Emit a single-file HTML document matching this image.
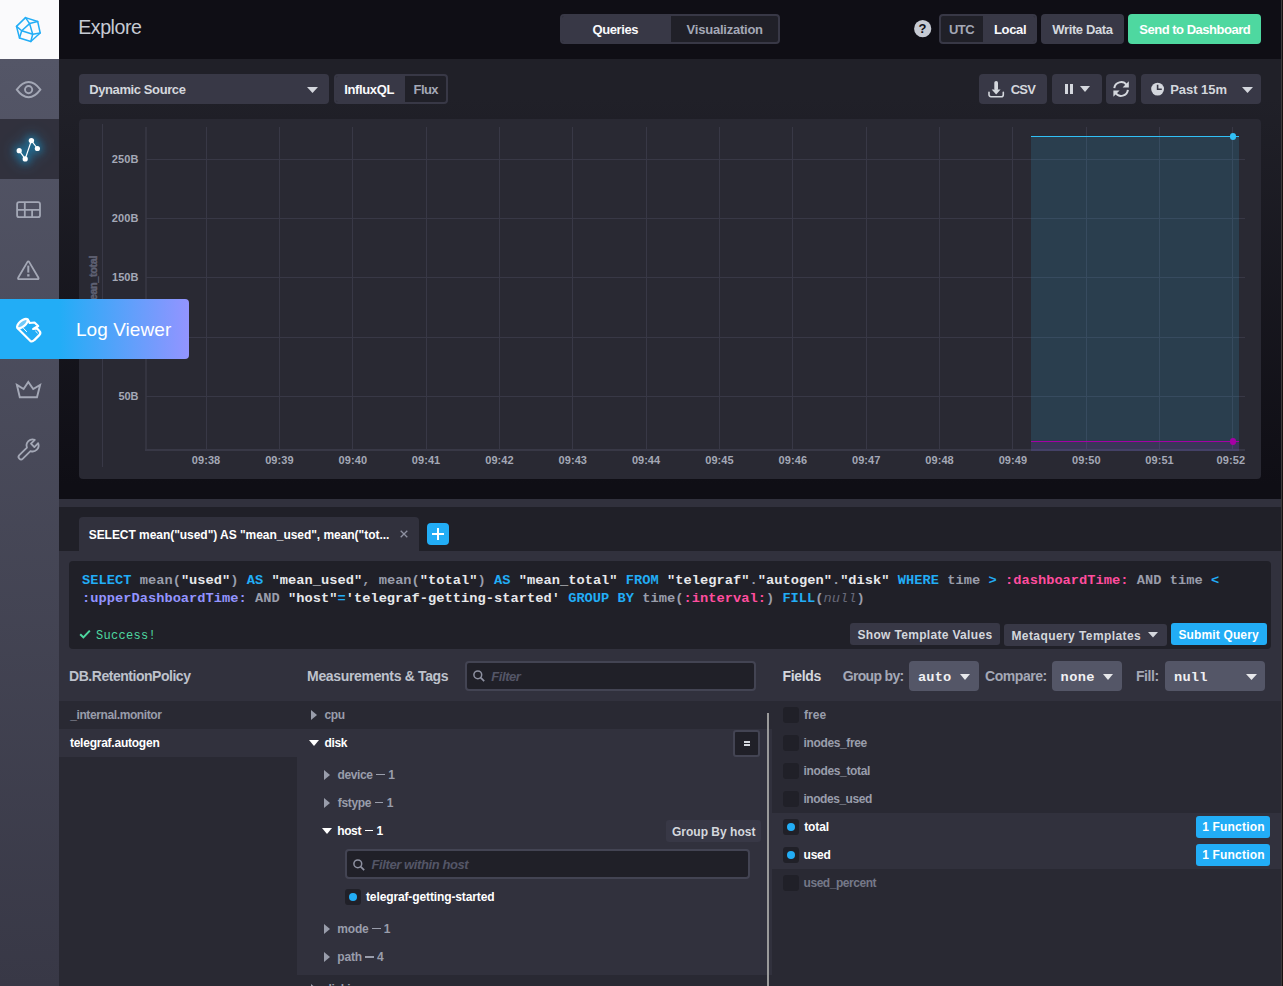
<!DOCTYPE html>
<html lang="en">
<head>
<meta charset="utf-8">
<title>Explore</title>
<style>
*{box-sizing:border-box;margin:0;padding:0}
html,body{width:1283px;height:986px;overflow:hidden;background:#0f0e15}
body{font-family:"Liberation Sans",sans-serif;color:#c6cad3;position:relative;font-size:13px}
.a{position:absolute}
.t{position:absolute;white-space:nowrap;line-height:1}
.b{font-weight:700}
.i{font-style:italic}
.m{font-family:"Liberation Mono",monospace}
svg{position:absolute;overflow:visible}
#sidebar{position:absolute;left:0;top:0;width:59px;height:986px;background:linear-gradient(180deg,#545667 0,#545667 59px,#383846 986px)}
#logo{position:absolute;left:0;top:0;width:59px;height:59px;background:#fafafc}
#navact{position:absolute;left:0;top:119px;width:59px;height:60px;background:#31313d}
#flyout{position:absolute;left:0;top:299px;width:189px;height:60px;border-radius:0 4px 4px 0;background:linear-gradient(90deg,#22adf6 0,#22adf6 59px,#9394ff 189px)}
#header{position:absolute;left:59px;top:0;width:1222px;height:59px;background:#0f0e15}
#page{position:absolute;left:59px;top:59px;width:1222px;height:927px;background:#202028}
#gz{position:absolute;left:59px;top:59px;width:1222px;height:440px;background:linear-gradient(180deg,#202028 0,#202028 40px,#0f0e15 425px,#0f0e15 440px)}
.btn{position:absolute;height:30px;border-radius:4px;background:#383846}
.xs{height:22px;border-radius:3px}
.radio{position:absolute;height:30px;border-radius:4px;background:#202028;border:2px solid #383846}
.radio i{position:absolute;top:0;height:26px;background:#383846;display:block}
.dd{position:absolute;height:30px;border-radius:4px;background:#545667}
.inp{position:absolute;border:2px solid #434453;background:#202028;border-radius:4px}
.cb{position:absolute;width:16px;height:16px;border-radius:3px;background:#202028}
.dot{position:absolute;width:8px;height:8px;border-radius:50%;background:#22adf6}
#graph{position:absolute;left:79px;top:119px;width:1182px;height:360px;background:#292933;border-radius:4px}
.gl{position:absolute;background:#383846}
.row{position:absolute;height:28px;background:#31313d}
</style>
</head>
<body>
<div id="page"></div>
<div id="gz"></div>
<div id="header"></div>

<!-- header controls -->
<div class="radio" style="left:560px;top:14px;width:220px"><i style="left:0;width:109px;border-radius:2px 0 0 2px"></i></div>
<svg style="left:914px;top:20px" width="18" height="18" viewBox="0 0 18 18"><circle cx="8.7" cy="8.7" r="8.6" fill="#c6cad3"/></svg>
<div class="radio" style="left:939px;top:14px;width:98px"><i style="left:42px;width:52px;border-radius:0 2px 2px 0"></i></div>
<div class="btn" style="left:1041px;top:14px;width:83px"></div>
<div class="btn" style="left:1128px;top:14px;width:133px;background:#4ed8a0"></div>

<!-- controls row -->
<div class="btn" style="left:79px;top:74px;width:250px"></div>
<svg style="left:307px;top:87px" width="11" height="6" viewBox="0 0 11 6"><path d="M0 0h11L5.5 6z" fill="#d4d7dd"/></svg>
<div class="radio" style="left:334px;top:74px;width:114px"><i style="left:0;width:69px;border-radius:2px 0 0 2px"></i></div>
<div class="btn" style="left:979px;top:74px;width:68px"></div>
<svg style="left:988px;top:80px" width="17" height="18" viewBox="0 0 17 18"><rect x="6.300" y="1" width="3.700" height="9.500" rx="1.800" fill="#d4d7dd"/><path d="M3.700 9.400h8.900L8.150 14.400z" fill="#d4d7dd"/><path d="M1 12.200v2.500a2 2 0 0 0 2 2h10.300a2 2 0 0 0 2-2v-2.500" fill="none" stroke="#d4d7dd" stroke-width="1.600" stroke-linecap="round"/></svg>
<div class="btn" style="left:1052px;top:74px;width:50px"></div>
<div class="a" style="left:1065px;top:84px;width:3px;height:10px;background:#d4d7dd"></div>
<div class="a" style="left:1070px;top:84px;width:3px;height:10px;background:#d4d7dd"></div>
<svg style="left:1080px;top:86px" width="10" height="6" viewBox="0 0 10 6"><path d="M0 0h10L5 6z" fill="#d4d7dd"/></svg>
<div class="btn" style="left:1106px;top:74px;width:30px"></div>
<svg style="left:1112px;top:80px" width="18" height="18" viewBox="0 0 18 18"><g fill="none" stroke="#d4d7dd" stroke-width="2"><path d="M2.300 8.200A6.800 6.800 0 0 1 14.600 5"/><path d="M15.900 9.800A6.800 6.800 0 0 1 3.600 13"/></g><path d="M16.800 1.200v6.200h-6.200z" fill="#d4d7dd"/><path d="M1.400 16.800v-6.200h6.200z" fill="#d4d7dd"/></svg>
<div class="btn" style="left:1141px;top:74px;width:120px"></div>
<svg style="left:1151px;top:82px" width="14" height="14" viewBox="0 0 14 14"><circle cx="6.600" cy="7.100" r="6.400" fill="#d4d7dd"/><path d="M6.600 2.800v4.400h4.200" fill="none" stroke="#383846" stroke-width="1.600"/></svg>
<svg style="left:1242px;top:87px" width="11" height="6" viewBox="0 0 11 6"><path d="M0 0h11L5.5 6z" fill="#d4d7dd"/></svg>

<!-- graph -->
<div id="graph"></div>
<div class="gl" style="left:102px;top:124px;width:1px;height:343px"></div>
<div class="gl" style="left:145px;top:127px;width:2px;height:324px;opacity:.75"></div>
<div class="gl" style="left:145px;top:449px;width:1100px;height:2px"></div>
<div class="gl" style="left:205.6px;top:127px;width:1px;height:323px"></div>
<div class="gl" style="left:278.9px;top:127px;width:1px;height:323px"></div>
<div class="gl" style="left:352.2px;top:127px;width:1px;height:323px"></div>
<div class="gl" style="left:425.6px;top:127px;width:1px;height:323px"></div>
<div class="gl" style="left:498.9px;top:127px;width:1px;height:323px"></div>
<div class="gl" style="left:572.3px;top:127px;width:1px;height:323px"></div>
<div class="gl" style="left:645.6px;top:127px;width:1px;height:323px"></div>
<div class="gl" style="left:719.0px;top:127px;width:1px;height:323px"></div>
<div class="gl" style="left:792.3px;top:127px;width:1px;height:323px"></div>
<div class="gl" style="left:865.7px;top:127px;width:1px;height:323px"></div>
<div class="gl" style="left:939.0px;top:127px;width:1px;height:323px"></div>
<div class="gl" style="left:1012.4px;top:127px;width:1px;height:323px"></div>
<div class="gl" style="left:1085.8px;top:127px;width:1px;height:323px"></div>
<div class="gl" style="left:1159.1px;top:127px;width:1px;height:323px"></div>
<div class="gl" style="left:1232.4px;top:127px;width:1px;height:323px"></div>
<div class="gl" style="left:146px;top:159.0px;width:1099px;height:1px"></div>
<div class="gl" style="left:146px;top:218.2px;width:1099px;height:1px"></div>
<div class="gl" style="left:146px;top:277.4px;width:1099px;height:1px"></div>
<div class="gl" style="left:146px;top:336.7px;width:1099px;height:1px"></div>
<div class="gl" style="left:146px;top:396.0px;width:1099px;height:1px"></div>
<div class="a" style="left:1031px;top:136px;width:208px;height:315px;background:rgba(49,192,246,.14)"></div>
<div class="a" style="left:1031px;top:441.5px;width:208px;height:9.5px;background:rgba(165,0,165,.13)"></div>
<div class="a" style="left:1031px;top:135.5px;width:208px;height:1.5px;background:#31c0f6"></div>
<div class="a" style="left:1031px;top:440.800px;width:208px;height:1.400px;background:#a500a5"></div>
<div class="a" style="left:1229.5px;top:133px;width:6.500px;height:6.500px;border-radius:50%;background:#31c0f6"></div>
<div class="a" style="left:1229.5px;top:438.200px;width:6.500px;height:6.500px;border-radius:50%;background:#a500a5"></div>
<!-- resizer + bottom -->
<div class="a" style="left:59px;top:499px;width:1222px;height:8px;background:#31313d"></div>
<div class="a" style="left:79px;top:517px;width:340px;height:34px;background:#31313d;border-radius:4px 4px 0 0"></div>
<svg style="left:400px;top:530px" width="8" height="8" viewBox="0 0 8 8"><path d="M0.700 0.700l6.600 6.600M7.300 0.700L0.700 7.300" stroke="#8e91a1" stroke-width="1.300" fill="none"/></svg>
<div class="a" style="left:427px;top:523px;width:22px;height:22px;background:#22adf6;border-radius:4px"></div>
<div class="a" style="left:432px;top:533px;width:12px;height:2px;background:#fff"></div>
<div class="a" style="left:437px;top:528px;width:2px;height:12px;background:#fff"></div>
<div class="a" style="left:59px;top:551px;width:1222px;height:150px;background:#31313d"></div>
<div class="a" style="left:59px;top:701px;width:1222px;height:285px;background:#292933"></div>
<div class="a" style="left:69px;top:561px;width:1202px;height:88px;background:#202028;border-radius:4px"></div>
<svg style="left:79px;top:629px" width="12" height="10" viewBox="0 0 12 10"><path d="M1.200 5.200l3.200 3.200 6.400-6.800" fill="none" stroke="#4ed8a0" stroke-width="2"/></svg>
<div class="btn xs" style="left:850px;top:623px;width:150px"></div>
<div class="btn xs" style="left:1004px;top:624px;width:163px"></div>
<svg style="left:1148px;top:632px" width="10" height="6" viewBox="0 0 10 6"><path d="M0 0h10L5 5.500z" fill="#d4d7dd"/></svg>
<div class="btn xs" style="left:1171px;top:623px;width:96px;background:#22adf6"></div>

<!-- schema header -->
<div class="inp" style="left:465px;top:661px;width:291px;height:30px"></div>
<svg style="left:473px;top:670px" width="12" height="12" viewBox="0 0 12 12"><circle cx="4.800" cy="4.800" r="3.900" fill="none" stroke="#8e91a1" stroke-width="1.500"/><path d="M7.600 7.600l3.600 3.600" stroke="#8e91a1" stroke-width="1.700"/></svg>
<div class="dd" style="left:909px;top:661px;width:70px"></div>
<svg style="left:960px;top:674px" width="10" height="6" viewBox="0 0 10 6"><path d="M0 0h10L5 6z" fill="#e7e8eb"/></svg>
<div class="dd" style="left:1052px;top:661px;width:70px"></div>
<svg style="left:1103px;top:674px" width="10" height="6" viewBox="0 0 10 6"><path d="M0 0h10L5 6z" fill="#e7e8eb"/></svg>
<div class="dd" style="left:1165px;top:661px;width:100px"></div>
<svg style="left:1246px;top:674px" width="11" height="6" viewBox="0 0 11 6"><path d="M0 0h11L5.5 6z" fill="#e7e8eb"/></svg>

<!-- db list -->
<div class="row" style="left:59px;top:729px;width:238px"></div>
<!-- measurements -->
<div class="a" style="left:297px;top:729px;width:475px;height:246px;background:#31313d"></div>
<svg style="left:311px;top:710px" width="6" height="10" viewBox="0 0 6 10"><path d="M0 0l6 5-6 5z" fill="#999dab"/></svg>
<svg style="left:309px;top:740px" width="10" height="6" viewBox="0 0 10 6"><path d="M0 0h10L5 6z" fill="#fff"/></svg>
<div class="a" style="left:733px;top:730px;width:27px;height:27px;border:2px solid #434453;background:#202028;border-radius:3px"></div>
<div class="a" style="left:744px;top:741px;width:6px;height:1.500px;background:#d4d7dd"></div>
<div class="a" style="left:744px;top:744.300px;width:6px;height:1.500px;background:#d4d7dd"></div>
<svg style="left:324px;top:770px" width="6" height="10" viewBox="0 0 6 10"><path d="M0 0l6 5-6 5z" fill="#999dab"/></svg>
<svg style="left:324px;top:798px" width="6" height="10" viewBox="0 0 6 10"><path d="M0 0l6 5-6 5z" fill="#999dab"/></svg>
<svg style="left:322px;top:828px" width="10" height="6" viewBox="0 0 10 6"><path d="M0 0h10L5 6z" fill="#fff"/></svg>
<svg style="left:324px;top:924px" width="6" height="10" viewBox="0 0 6 10"><path d="M0 0l6 5-6 5z" fill="#999dab"/></svg>
<svg style="left:324px;top:952px" width="6" height="10" viewBox="0 0 6 10"><path d="M0 0l6 5-6 5z" fill="#999dab"/></svg>
<svg style="left:311px;top:984px" width="6" height="10" viewBox="0 0 6 10"><path d="M0 0l6 5-6 5z" fill="#999dab"/></svg>
<div class="btn xs" style="left:666px;top:820px;width:95px"></div>
<div class="inp" style="left:345px;top:849px;width:405px;height:30px"></div>
<svg style="left:353px;top:858.5px" width="12" height="12" viewBox="0 0 12 12"><circle cx="4.800" cy="4.800" r="3.900" fill="none" stroke="#8e91a1" stroke-width="1.500"/><path d="M7.600 7.600l3.600 3.600" stroke="#8e91a1" stroke-width="1.700"/></svg>
<div class="cb" style="left:345px;top:889px"></div><div class="dot" style="left:349px;top:893px"></div>
<div class="a" style="left:767px;top:713px;width:2px;height:273px;background:#9a9a9a"></div>

<!-- fields -->
<div class="row" style="left:772px;top:813px;width:509px;height:56px"></div>
<div class="cb" style="left:783px;top:707px"></div>
<div class="cb" style="left:783px;top:735px"></div>
<div class="cb" style="left:783px;top:763px"></div>
<div class="cb" style="left:783px;top:791px"></div>
<div class="cb" style="left:783px;top:819px"></div><div class="dot" style="left:787px;top:823px"></div>
<div class="cb" style="left:783px;top:847px"></div><div class="dot" style="left:787px;top:851px"></div>
<div class="cb" style="left:783px;top:875px"></div>
<div class="btn xs" style="left:1196px;top:816px;width:74px;background:#22adf6"></div>
<div class="btn xs" style="left:1196px;top:844px;width:74px;background:#22adf6"></div>
<!-- edge-strip -->
<div class="a" style="left:1281px;top:0;width:1px;height:986px;background:#3c3939"></div>
<div class="a" style="left:1282px;top:0;width:1px;height:986px;background:#181010"></div>
<!-- code editor -->
<style>
.cl{position:absolute;left:82px;white-space:pre;font-family:"Liberation Mono",monospace;font-weight:700;font-size:13.7px;letter-spacing:.025px;line-height:18px;color:#999dab}
.k{color:#22adf6}.s{color:#e7e8eb}.p{color:#ff4d9e}.u{color:#9394ff}.n{color:#676978;font-style:italic;font-weight:400}
</style>
<div class="cl" style="top:572px"><span class="k">SELECT</span> mean(<span class="s">"used"</span>) <span class="k">AS</span> <span class="s">"mean_used"</span>, mean(<span class="s">"total"</span>) <span class="k">AS</span> <span class="s">"mean_total"</span> <span class="k">FROM</span> <span class="s">"telegraf"</span>.<span class="s">"autogen"</span>.<span class="s">"disk"</span> <span class="k">WHERE</span> time <span class="k">&gt;</span> <span class="p">:dashboardTime:</span> AND time <span class="k">&lt;</span></div>
<div class="cl" style="top:590px"><span class="u">:upperDashboardTime:</span> AND <span class="s">"host"</span><span class="k">=</span><span class="s">'telegraf-getting-started'</span> <span class="k">GROUP BY</span> time(<span class="p">:interval:</span>) <span class="k">FILL</span>(<span class="n">null</span>)</div>
<div class="t" style="left:87.5px;top:256.300px;font-size:11px;font-weight:700;letter-spacing:-.45px;color:#5f6173;-webkit-text-stroke:.4px #5f6173;transform-origin:0 0;transform:rotate(-90deg) translate(-100%,0);">mean_total</div>
<!-- texts -->
<div class="t" style="left:78.20px;top:18.35px;font-size:19.6px;color:#c6cad3;letter-spacing:-0.443px">Explore</div>
<div class="t b" style="left:592.50px;top:22.60px;font-size:13px;color:#fafafc;letter-spacing:-0.414px">Queries</div>
<div class="t b" style="left:686.60px;top:22.60px;font-size:13px;color:#a4a8b6;letter-spacing:-0.232px">Visualization</div>
<div class="t b" style="left:918.40px;top:22.20px;font-size:13px;color:#0f0e15">?</div>
<div class="t b" style="left:948.90px;top:22.60px;font-size:13px;color:#a4a8b6;letter-spacing:-0.465px">UTC</div>
<div class="t b" style="left:994.00px;top:22.60px;font-size:13px;color:#fafafc;letter-spacing:-0.335px">Local</div>
<div class="t b" style="left:1052.30px;top:22.60px;font-size:13px;color:#d4d7dd;letter-spacing:-0.369px">Write Data</div>
<div class="t b" style="left:1139.30px;top:22.60px;font-size:13px;color:#ffffff;letter-spacing:-0.484px">Send to Dashboard</div>
<div class="t b" style="left:89.20px;top:82.60px;font-size:13px;color:#d4d7dd;letter-spacing:-0.396px">Dynamic Source</div>
<div class="t b" style="left:344.20px;top:82.60px;font-size:13px;color:#fafafc;letter-spacing:-0.368px">InfluxQL</div>
<div class="t b" style="left:413.60px;top:82.60px;font-size:13px;color:#a4a8b6;letter-spacing:-0.631px">Flux</div>
<div class="t b" style="left:1010.70px;top:82.60px;font-size:13px;color:#d4d7dd;letter-spacing:-0.730px">CSV</div>
<div class="t b" style="left:1170.20px;top:82.60px;font-size:13px;color:#d4d7dd;letter-spacing:-0.033px">Past 15m</div>
<div class="t b" style="left:88.70px;top:529.10px;font-size:12px;color:#ffffff;letter-spacing:-0.045px">SELECT mean("used") AS "mean_used", mean("tot...</div>
<div class="t b" style="left:857.50px;top:628.70px;font-size:12px;color:#d4d7dd;letter-spacing:0.320px">Show Template Values</div>
<div class="t b" style="left:1011.40px;top:629.80px;font-size:12px;color:#d4d7dd;letter-spacing:0.420px">Metaquery Templates</div>
<div class="t b" style="left:1178.40px;top:628.50px;font-size:12px;color:#ffffff;letter-spacing:0.145px">Submit Query</div>
<div class="t m" style="left:96.10px;top:629.50px;font-size:12px;color:#4ed8a0;letter-spacing:0.270px">Success!</div>
<div class="t b" style="left:69.10px;top:669.35px;font-size:14px;color:#bec2cc;letter-spacing:-0.472px">DB.RetentionPolicy</div>
<div class="t b" style="left:307.10px;top:669.35px;font-size:14px;color:#bec2cc;letter-spacing:-0.338px">Measurements &amp; Tags</div>
<div class="t b i" style="left:491.30px;top:669.80px;font-size:13px;color:#545667;letter-spacing:-0.445px">Filter</div>
<div class="t b" style="left:782.40px;top:669.35px;font-size:14px;color:#d4d7dd;letter-spacing:-0.314px">Fields</div>
<div class="t b" style="left:842.70px;top:669.35px;font-size:14px;color:#a4a8b6;letter-spacing:-0.665px">Group by:</div>
<div class="t b m" style="left:918.00px;top:670.50px;font-size:13.7px;color:#f0f0f3;letter-spacing:0.145px">auto</div>
<div class="t b" style="left:985.00px;top:669.35px;font-size:14px;color:#a4a8b6;letter-spacing:-0.440px">Compare:</div>
<div class="t b m" style="left:1060.60px;top:670.50px;font-size:13.7px;color:#f0f0f3;letter-spacing:0.345px">none</div>
<div class="t b" style="left:1135.90px;top:669.35px;font-size:14px;color:#a4a8b6;letter-spacing:-0.380px">Fill:</div>
<div class="t b m" style="left:1174.00px;top:670.50px;font-size:13.7px;color:#f0f0f3;letter-spacing:0.212px">null</div>
<div class="t b" style="left:70.20px;top:709.10px;font-size:12px;color:#999dab;letter-spacing:-0.390px">_internal.monitor</div>
<div class="t b" style="left:69.90px;top:737.10px;font-size:12px;color:#ffffff;letter-spacing:-0.234px">telegraf.autogen</div>
<div class="t b" style="left:324.50px;top:709.10px;font-size:12px;color:#999dab;letter-spacing:-0.352px">cpu</div>
<div class="t b" style="left:324.60px;top:737.10px;font-size:12px;color:#ffffff;letter-spacing:-0.413px">disk</div>
<div class="t b i" style="left:371.60px;top:858.00px;font-size:13px;color:#545667;letter-spacing:-0.410px">Filter within host</div>
<div class="t b" style="left:366.00px;top:891.10px;font-size:12px;color:#ffffff;letter-spacing:-0.122px">telegraf-getting-started</div>
<div class="t b" style="left:671.90px;top:825.80px;font-size:12px;color:#d4d7dd;letter-spacing:0.022px">Group By host</div>
<div class="t b" style="left:804.10px;top:709.10px;font-size:12px;color:#999dab;letter-spacing:-0.013px">free</div>
<div class="t b" style="left:803.50px;top:737.10px;font-size:12px;color:#999dab;letter-spacing:-0.359px">inodes_free</div>
<div class="t b" style="left:803.50px;top:765.10px;font-size:12px;color:#999dab;letter-spacing:-0.349px">inodes_total</div>
<div class="t b" style="left:803.50px;top:793.10px;font-size:12px;color:#999dab;letter-spacing:-0.462px">inodes_used</div>
<div class="t b" style="left:804.20px;top:821.10px;font-size:12px;color:#ffffff;letter-spacing:-0.124px">total</div>
<div class="t b" style="left:803.60px;top:849.10px;font-size:12px;color:#ffffff;letter-spacing:-0.293px">used</div>
<div class="t b" style="left:803.60px;top:877.10px;font-size:12px;color:#757888;letter-spacing:-0.467px">used_percent</div>
<div class="t b" style="left:1202.20px;top:821.10px;font-size:12px;color:#ffffff;letter-spacing:0.185px">1 Function</div>
<div class="t b" style="left:1202.20px;top:849.10px;font-size:12px;color:#ffffff;letter-spacing:0.185px">1 Function</div>
<div class="t b" style="left:111.70px;top:153.85px;font-size:11px;color:#a4a8b6;letter-spacing:0.116px">250B</div>
<div class="t b" style="left:111.70px;top:213.10px;font-size:11px;color:#a4a8b6;letter-spacing:0.116px">200B</div>
<div class="t b" style="left:112.00px;top:272.35px;font-size:11px;color:#a4a8b6;letter-spacing:0.016px">150B</div>
<div class="t b" style="left:112.00px;top:331.60px;font-size:11px;color:#a4a8b6;letter-spacing:0.016px">100B</div>
<div class="t b" style="left:118.40px;top:390.85px;font-size:11px;color:#a4a8b6;letter-spacing:-0.118px">50B</div>
<div class="t b" style="left:191.80px;top:454.85px;font-size:11px;color:#a4a8b6;letter-spacing:0.071px">09:38</div>
<div class="t b" style="left:265.15px;top:454.85px;font-size:11px;color:#a4a8b6;letter-spacing:0.071px">09:39</div>
<div class="t b" style="left:338.50px;top:454.85px;font-size:11px;color:#a4a8b6;letter-spacing:0.096px">09:40</div>
<div class="t b" style="left:411.85px;top:454.85px;font-size:11px;color:#a4a8b6;letter-spacing:0.046px">09:41</div>
<div class="t b" style="left:485.20px;top:454.85px;font-size:11px;color:#a4a8b6;letter-spacing:0.096px">09:42</div>
<div class="t b" style="left:558.55px;top:454.85px;font-size:11px;color:#a4a8b6;letter-spacing:0.071px">09:43</div>
<div class="t b" style="left:631.90px;top:454.85px;font-size:11px;color:#a4a8b6">09:44</div>
<div class="t b" style="left:705.25px;top:454.85px;font-size:11px;color:#a4a8b6;letter-spacing:0.046px">09:45</div>
<div class="t b" style="left:778.60px;top:454.85px;font-size:11px;color:#a4a8b6;letter-spacing:0.071px">09:46</div>
<div class="t b" style="left:851.95px;top:454.85px;font-size:11px;color:#a4a8b6;letter-spacing:0.096px">09:47</div>
<div class="t b" style="left:925.30px;top:454.85px;font-size:11px;color:#a4a8b6;letter-spacing:0.071px">09:48</div>
<div class="t b" style="left:998.65px;top:454.85px;font-size:11px;color:#a4a8b6;letter-spacing:0.071px">09:49</div>
<div class="t b" style="left:1072.00px;top:454.85px;font-size:11px;color:#a4a8b6;letter-spacing:0.096px">09:50</div>
<div class="t b" style="left:1145.35px;top:454.85px;font-size:11px;color:#a4a8b6;letter-spacing:0.046px">09:51</div>
<div class="t b" style="left:1216.60px;top:454.85px;font-size:11px;color:#a4a8b6;letter-spacing:0.096px">09:52</div>
<div class="t b" style="left:337.60px;top:768.90px;font-size:12px;color:#999dab;letter-spacing:-0.417px">device</div>
<div class="t b" style="left:388.20px;top:768.90px;font-size:12px;color:#999dab">1</div>
<div class="t b" style="left:337.80px;top:796.80px;font-size:12px;color:#999dab;letter-spacing:-0.334px">fstype</div>
<div class="t b" style="left:386.80px;top:796.80px;font-size:12px;color:#999dab">1</div>
<div class="t b" style="left:337.20px;top:824.80px;font-size:12px;color:#ffffff;letter-spacing:-0.378px">host</div>
<div class="t b" style="left:376.50px;top:824.80px;font-size:12px;color:#ffffff">1</div>
<div class="t b" style="left:337.30px;top:922.90px;font-size:12px;color:#999dab;letter-spacing:-0.177px">mode</div>
<div class="t b" style="left:383.70px;top:922.90px;font-size:12px;color:#999dab">1</div>
<div class="t b" style="left:337.30px;top:951.00px;font-size:12px;color:#999dab;letter-spacing:-0.200px">path</div>
<div class="t b" style="left:376.90px;top:951.00px;font-size:12px;color:#999dab">4</div>
<div class="t b" style="left:324.60px;top:983.10px;font-size:12px;color:#999dab;letter-spacing:-0.369px">diskio</div>
<div class="a" style="left:376.2px;top:774.1px;width:8.4px;height:1.4px;background:#999dab"></div>
<div class="a" style="left:374.8px;top:802.0px;width:8.4px;height:1.4px;background:#999dab"></div>
<div class="a" style="left:365.0px;top:830.0px;width:8.4px;height:1.4px;background:#ffffff"></div>
<div class="a" style="left:372.2px;top:928.1px;width:8.4px;height:1.4px;background:#999dab"></div>
<div class="a" style="left:365.3px;top:956.2px;width:8.4px;height:1.4px;background:#999dab"></div>
<!-- sidebar -->
<div id="sidebar"><div id="logo"></div><div id="navact"></div></div>
<svg style="left:0;top:0" width="59" height="59" viewBox="0 0 59 59"><g fill="none" stroke="#22adf6" stroke-width="1.500" stroke-linejoin="round" stroke-linecap="round"><path d="M25.5 17.600L37.700 21.500 40.200 33 30.800 41.500 19.500 38 16.500 26.400z"/><path d="M29.600 23.600L21.700 30.800 32.700 34.300z"/><path d="M25.500 17.600l4.100 6 8.100-2.100M16.500 26.400l5.200 4.400-2.200 7.200M40.200 33l-7.500 1.300-1.900 7.200"/></g></svg>
<svg style="left:0;top:59px" width="59" height="60" viewBox="0 0 59 60"><g fill="none" stroke="#a4a8b6" stroke-width="1.900"><path d="M16.800 30.600C20.500 25.600 24.200 23 28.600 23s8.100 2.600 11.800 7.600C36.700 35.600 33 38.200 28.600 38.200s-8.100-2.600-11.800-7.600z"/><circle cx="28.600" cy="30.600" r="3.600"/></g></svg>
<svg style="left:0;top:118px;filter:drop-shadow(0 0 4px rgba(0,190,255,.95)) drop-shadow(0 0 7px rgba(34,173,246,.75))" width="59" height="60" viewBox="0 0 59 60"><path d="M19.200 32.700l6 8.200 6.200-18.300 6 7.900" fill="none" stroke="#fff" stroke-width="1.200"/><g fill="#fff"><circle cx="19.200" cy="32.700" r="2.600"/><circle cx="25.200" cy="40.900" r="2.600"/><circle cx="31.400" cy="22.600" r="2.700"/><circle cx="37.400" cy="30.500" r="2.600"/></g></svg>
<svg style="left:0;top:179px" width="59" height="60" viewBox="0 0 59 60"><g fill="none" stroke="#a4a8b6" stroke-width="1.800"><rect x="17.100" y="23.200" width="22.900" height="15" rx="2"/><path d="M17.100 30.800h22.900M24.800 23.200v15M32.100 30.800v7.400"/></g></svg>
<svg style="left:0;top:239px" width="59" height="60" viewBox="0 0 59 60"><path d="M27.200 23.400Q28.300 21.500 29.400 23.400L38.300 38.500Q39.200 40.100 37.400 40.100H19.200Q17.400 40.100 18.300 38.500Z" fill="none" stroke="#a4a8b6" stroke-width="1.800" stroke-linejoin="round"/><path d="M28.300 26.600v7" stroke="#a4a8b6" stroke-width="2"/><rect x="27.200" y="35.200" width="2.300" height="2.300" fill="#a4a8b6"/></svg>
<div id="flyout"></div>
<svg style="left:0;top:299px" width="59" height="60" viewBox="0 0 59 60"><g fill="none" stroke="#fff" stroke-width="2.200" stroke-linejoin="round" stroke-linecap="round"><ellipse cx="22.400" cy="24.600" rx="6.500" ry="2.900" transform="rotate(-40 22.400 24.600)" fill="rgba(255,255,255,.35)"/><path d="M17.600 29.200L30.200 41.800Q32.200 43.400 34.300 41.100L39.500 35.900Q41.300 33.700 39.200 31.700L37.100 29.500 33.200 30 38.200 27 34.500 23.500 29.700 24 27.800 20.500"/><path d="M23.600 29.400l3 3.200M35.600 32.200l1.800 1.800" stroke-width="1"/></g></svg>
<svg style="left:0;top:359px" width="59" height="60" viewBox="0 0 59 60"><path d="M16.900 25.900l6.700 4.100 4.700-7 4.900 7 6.900-4.100-3.100 12.400H19.800z" fill="none" stroke="#a4a8b6" stroke-width="1.900" stroke-linejoin="miter"/></svg>
<svg style="left:0;top:419px" width="59" height="60" viewBox="0 0 59 60"><g transform="translate(28.500 30.500) rotate(45)"><path d="M-2.400 -4.400V-9.800A6 6 0 0 0 -6 -4.300 6 6 0 0 0 -2.500 1.200V12a2.500 2.500 0 0 0 5 0V1.200A6 6 0 0 0 6 -4.300 6 6 0 0 0 2.400 -9.800V-4.400z" fill="none" stroke="#a4a8b6" stroke-width="1.800" stroke-linejoin="round" transform="translate(0 -1.500)"/></g></svg>
<div class="t" style="left:76.00px;top:319.90px;font-size:19px;color:#ffffff;letter-spacing:0.057px">Log Viewer</div>
</body>
</html>
